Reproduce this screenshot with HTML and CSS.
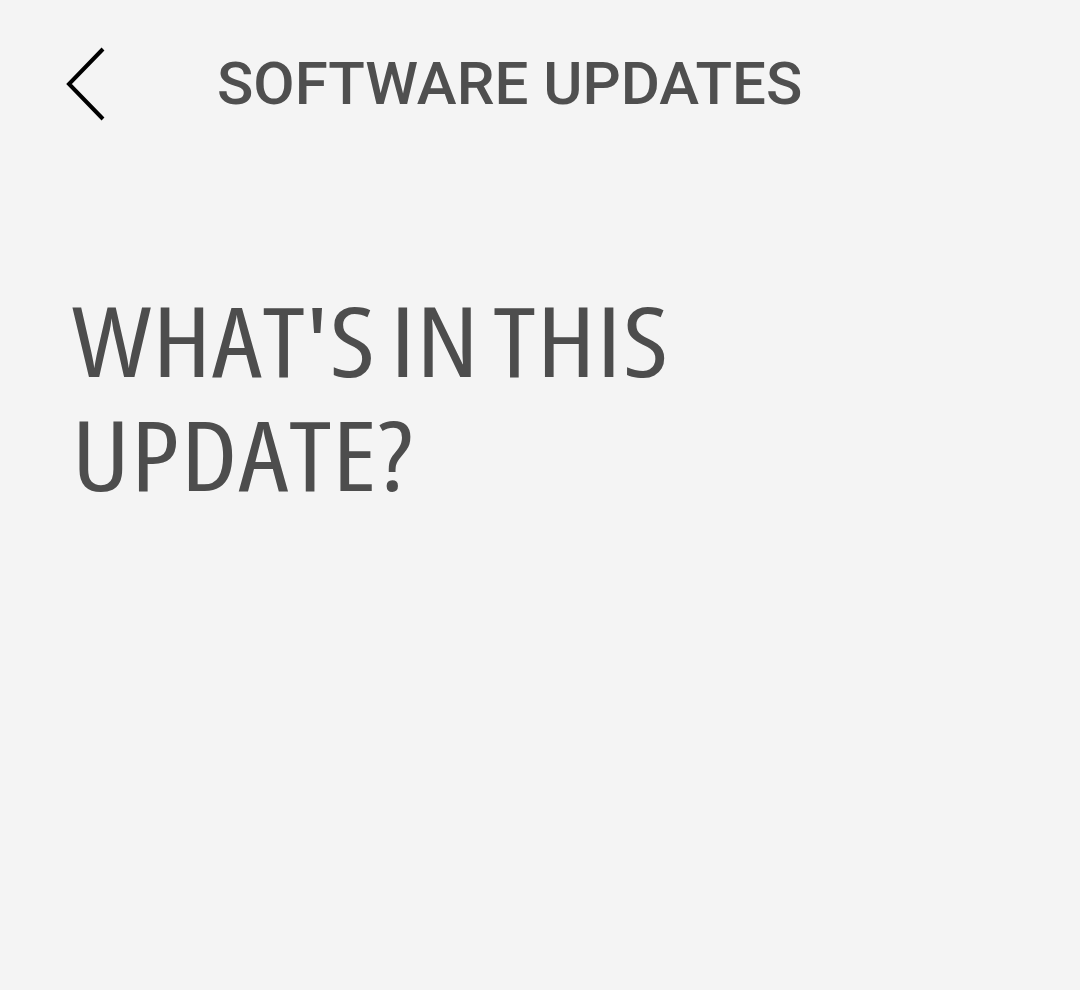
FILE: index.html
```html
<!DOCTYPE html>
<html>
<head>
<meta charset="utf-8">
<link rel="stylesheet" href="styles.css">
</head>
<body>
<div class="screen">
  <header class="topbar">
    <button class="back" aria-label="Back">
      <svg width="40" height="74" viewBox="0 0 40 74"><path d="M37 2 L3 37 L37 72" fill="none" stroke="#000" stroke-width="4"/></svg>
    </button>
    <h1 class="title">SOFTWARE UPDATES</h1>
  </header>
  <h2 class="heading">WHAT'S IN THIS<br>UPDATE?</h2>
</div>
</body>
</html>
```
FILE: styles.css
```css
html, body {
  margin: 0;
  padding: 0;
  background: #f4f4f4;
}
.screen {
  width: 1080px;
  height: 990px;
  background: #f4f4f4;
  overflow: hidden;
}
.topbar {
  display: flex;
  align-items: center;
  padding: 47px 0 0 66px;
  height: 74px;
}
.back {
  border: 0;
  background: none;
  padding: 0;
  width: 40px;
  height: 74px;
  display: flex;
}
.title {
  margin: 0 0 0 111px;
  font-family: Roboto, "Liberation Sans", sans-serif;
  font-weight: 500;
  font-size: 60px;
  color: #4f4f4f;
  line-height: 1;
}
.heading {
  margin: 162px 0 0 72px;
  font-family: "Open Sans", "DejaVu Sans", sans-serif;
  font-stretch: 75%;
  font-weight: 370;
  font-size: 96px;
  line-height: 114px;
  letter-spacing: 1px;
  word-spacing: -7px;
  color: #4d4d4d;
  transform: scaleX(1.16);
  transform-origin: 0 0;
}
```
